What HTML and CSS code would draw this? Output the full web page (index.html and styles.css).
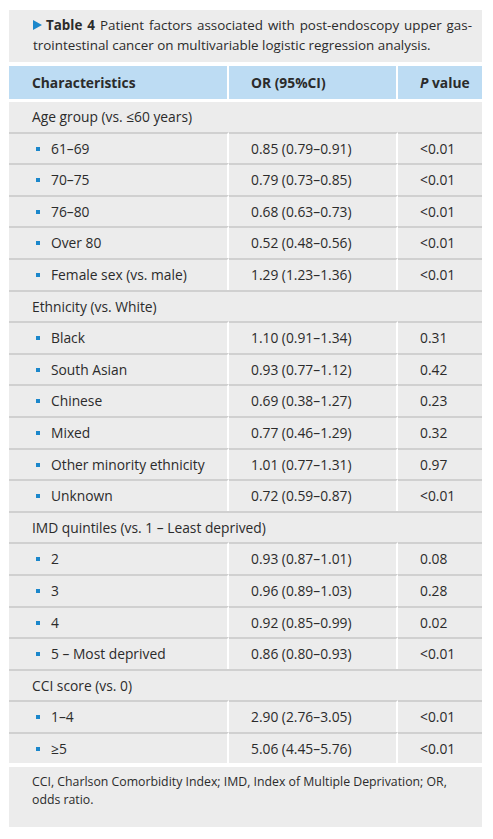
FILE: index.html
```html
<!DOCTYPE html>
<html lang="en">
<head>
<meta charset="utf-8">
<title>Table 4</title>
<link rel="stylesheet" href="styles.css">
</head>
<body>
<div class="wrap">
  <div class="caption"><svg class="tri" width="9" height="10" viewBox="0 0 9 10"><polygon points="0,0 9,5 0,10" fill="#1b87cb"/></svg><b class="label">Table 4</b><span class="desc">Patient factors associated with post-endoscopy upper gas-trointestinal cancer on multivariable logistic regression analysis.</span></div>
  <table class="data">
    <colgroup><col class="w1"><col class="w2"><col class="w3"></colgroup>
    <thead>
      <tr><th>Characteristics</th><th>OR (95%CI)</th><th><i>P</i> value</th></tr>
    </thead>
    <tbody>
      <tr class="section"><td colspan="3">Age group (vs. ≤60 years)</td></tr>
      <tr><td><span class="bullet"></span>61–69</td><td>0.85 (0.79–0.91)</td><td>&lt;0.01</td></tr>
      <tr><td><span class="bullet"></span>70–75</td><td>0.79 (0.73–0.85)</td><td>&lt;0.01</td></tr>
      <tr><td><span class="bullet"></span>76–80</td><td>0.68 (0.63–0.73)</td><td>&lt;0.01</td></tr>
      <tr><td><span class="bullet"></span>Over 80</td><td>0.52 (0.48–0.56)</td><td>&lt;0.01</td></tr>
      <tr><td><span class="bullet"></span>Female sex (vs. male)</td><td>1.29 (1.23–1.36)</td><td>&lt;0.01</td></tr>
      <tr class="section"><td colspan="3">Ethnicity (vs. White)</td></tr>
      <tr><td><span class="bullet"></span>Black</td><td>1.10 (0.91–1.34)</td><td>0.31</td></tr>
      <tr><td><span class="bullet"></span>South Asian</td><td>0.93 (0.77–1.12)</td><td>0.42</td></tr>
      <tr><td><span class="bullet"></span>Chinese</td><td>0.69 (0.38–1.27)</td><td>0.23</td></tr>
      <tr><td><span class="bullet"></span>Mixed</td><td>0.77 (0.46–1.29)</td><td>0.32</td></tr>
      <tr><td><span class="bullet"></span>Other minority ethnicity</td><td>1.01 (0.77–1.31)</td><td>0.97</td></tr>
      <tr><td><span class="bullet"></span>Unknown</td><td>0.72 (0.59–0.87)</td><td>&lt;0.01</td></tr>
      <tr class="section"><td colspan="3">IMD quintiles (vs. 1 – Least deprived)</td></tr>
      <tr><td><span class="bullet"></span>2</td><td>0.93 (0.87–1.01)</td><td>0.08</td></tr>
      <tr><td><span class="bullet"></span>3</td><td>0.96 (0.89–1.03)</td><td>0.28</td></tr>
      <tr><td><span class="bullet"></span>4</td><td>0.92 (0.85–0.99)</td><td>0.02</td></tr>
      <tr><td><span class="bullet"></span>5 – Most deprived</td><td>0.86 (0.80–0.93)</td><td>&lt;0.01</td></tr>
      <tr class="section"><td colspan="3">CCI score (vs. 0)</td></tr>
      <tr><td><span class="bullet"></span>1–4</td><td>2.90 (2.76–3.05)</td><td>&lt;0.01</td></tr>
      <tr><td><span class="bullet"></span>≥5</td><td>5.06 (4.45–5.76)</td><td>&lt;0.01</td></tr>
    </tbody>
  </table>
  <div class="foot">CCI, Charlson Comorbidity Index; IMD, Index of Multiple Deprivation; OR, odds ratio.</div>
</div>
</body>
</html>
```

FILE: styles.css
```css
html, body {
  margin: 0;
  padding: 0;
  background: #ffffff;
}
body {
  font-family: "Open Sans", "Noto Sans", sans-serif;
  font-size: 13.8px;
  color: #2b2b2b;
}
.wrap {
  width: 473px;
  padding: 10px 0 0 9px;
}
.caption {
  background: #ececec;
  padding: 5px 10px 7px 24px;
  line-height: 20px;
  font-size: 13.4px;
  text-align: justify;
}
.tri {
  margin-right: 4px;
  vertical-align: 0;
}
.label {
  font-weight: 700;
  margin-right: 5px;
}
.data {
  width: 473px;
  margin-top: 4px;
  border-collapse: separate;
  border-spacing: 0;
  table-layout: fixed;
}
.w1 { width: 220px; }
.w2 { width: 169px; }
.w3 { width: 84px; }
.data th {
  background: #bddcf3;
  text-align: left;
  font-weight: 700;
  padding: 8px 0 7px 22px;
  line-height: 18px;
  border-bottom: 3px solid #ffffff;
}
.data th:first-child { padding-left: 23px; }
.data th:not(:last-child),
.data td:not(:last-child) {
  border-right: 2px solid #ffffff;
}
.data td {
  background: #ececec;
  padding: 6px 0 6px 22px;
  line-height: 17.6px;
  white-space: nowrap;
}
.data td:first-child { padding-left: 23px; }
.data tbody tr + tr td {
  border-top: 2px solid #d0d0d0;
}
.data tr.section td { border-right: 0; }
.bullet {
  display: inline-block;
  width: 4px;
  height: 4px;
  background: #1b87cb;
  margin: 0 11px 0 4px;
  vertical-align: 3px;
}
.foot {
  background: #ececec;
  margin-top: 4px;
  padding: 6px 20px 18px 23px;
  line-height: 18px;
  font-size: 12.3px;
}
```
